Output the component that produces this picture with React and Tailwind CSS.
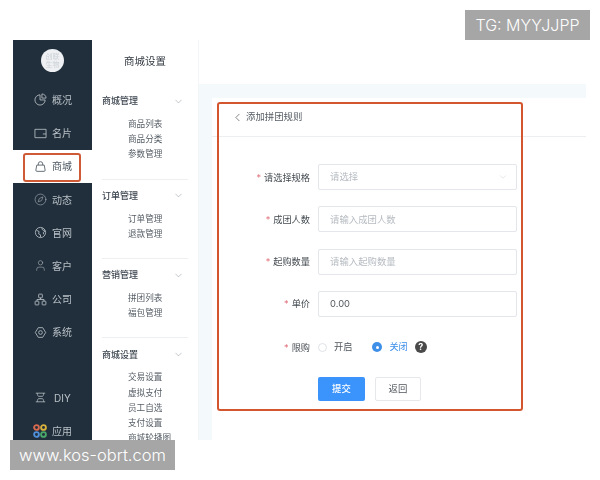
import React from "react";
import { ChevronDown, ChevronLeft, Compass, User } from "lucide-react";

const cjk = "font-['Inter','Noto_Sans_CJK_SC',sans-serif]";

function PieIcon() {
  return (
    <svg width="13" height="13" viewBox="0 0 14 14" fill="none" stroke="currentColor" strokeWidth="0.9">
      <path d="M6.5 2a5.5 5.5 0 1 0 5.5 5.5H6.5z" />
      <path d="M8.5 1v4.5H13A4.5 4.5 0 0 0 8.5 1z" />
    </svg>
  );
}
function CardIcon() {
  return (
    <svg width="13" height="13" viewBox="0 0 14 14" fill="none" stroke="currentColor" strokeWidth="0.9">
      <path d="M1 2.5h12v9H1z" />
      <path d="M9.5 7.5H13" />
    </svg>
  );
}
function BagIcon() {
  return (
    <svg width="13" height="13" viewBox="0 0 14 14" fill="none" stroke="currentColor" strokeWidth="0.9">
      <path d="M3 5.5h8l1 5.5a1.2 1.2 0 0 1-1.2 1.2H3.2A1.2 1.2 0 0 1 2 11z" />
      <path d="M4.6 5.5V4.2a2.4 2.4 0 0 1 4.8 0v1.3" />
    </svg>
  );
}
function GlobeIcon() {
  return (
    <svg width="13" height="13" viewBox="0 0 14 14" fill="none" stroke="currentColor" strokeWidth="0.9">
      <circle cx="7" cy="7" r="5.5" />
      <path d="M2.5 4.5l3 1.5-.5 2.5 2 1v2.5M8.5 2l.5 2 3 1.5-2 1.5.5 2" />
    </svg>
  );
}
function OrgIcon() {
  return (
    <svg width="13" height="13" viewBox="0 0 14 14" fill="none" stroke="currentColor" strokeWidth="0.9">
      <rect x="5" y="1.2" width="4" height="4" rx="0.6" />
      <rect x="1.2" y="8.8" width="4" height="4" rx="0.6" />
      <rect x="8.8" y="8.8" width="4" height="4" rx="0.6" />
      <path d="M7 5.2V7M3.2 8.8V7h7.6v1.8" />
    </svg>
  );
}
function GearIcon() {
  return (
    <svg width="13" height="13" viewBox="0 0 14 14" fill="none" stroke="currentColor" strokeWidth="0.9">
      <path d="M4.6 1.8h4.8L12.6 7l-3.2 5.2H4.6L1.4 7z" strokeLinejoin="round" />
      <circle cx="7" cy="7" r="2" />
    </svg>
  );
}
function DiyIcon() {
  return (
    <svg width="11" height="11" viewBox="0 0 14 14" fill="none" stroke="currentColor" strokeWidth="1">
      <path d="M1 1.5h12M1 12.5h12M3 1.5c0 2.500.5 3.500 1.500 4h5c1-.5 1.500-1.500 1.500-4M3 12.500c0-2.500.5-3.500 1.500-4h5c1 .5 1.500 1.500 1.500 4" />
    </svg>
  );
}
function AppsIcon() {
  return (
    <svg width="14" height="14" viewBox="0 0 14 14" fill="none" strokeWidth="1.9">
      <circle cx="3.5" cy="3.5" r="2.4" stroke="#d9694f" />
      <circle cx="10.5" cy="3.5" r="2.4" stroke="#d8b23c" />
      <circle cx="3.500" cy="10.500" r="2.4" stroke="#4f8fd9" />
      <circle cx="10.500" cy="10.500" r="2.4" stroke="#49a86a" />
    </svg>
  );
}

function NavItem({ icon, label, active, latin }) {
  return (
    <div className={`flex h-[33.2px] shrink-0 items-center pl-[20px] text-[10px] ${active ? "bg-white text-[#4a5560]" : "text-[#b9c0c6]"}`}>
      <span className="flex w-[14px] justify-center">{icon}</span>
      <span className={latin ? "ml-[7px] pt-[1px]" : "ml-[5px] pt-[1px]"}>{label}</span>
    </div>
  );
}

function MenuGroup({ title, items, last }) {
  return (
    <div className={`ml-[10px] mr-[10px] ${last ? "" : "mb-[5px] border-b border-[#eeeff1] pb-[16px]"}`}>
      <div className="flex h-[22px] items-center justify-between pr-[4px] text-[9px] font-medium text-[#3d4650]">
        <span>{title}</span>
        <ChevronDown size={11} strokeWidth={1} className="text-[#7d858c]" />
      </div>
      <div className="mt-[5px] flex flex-col pl-[26px] text-[8.6px] leading-[15.2px] text-[#555d65]">
        {items.map((t) => (
          <span key={t}>{t}</span>
        ))}
      </div>
    </div>
  );
}

function Row({ label, tall, children }) {
  return (
    <div className="flex h-[42.3px] items-start">
      <label className={`flex w-[85px] shrink-0 items-center justify-end gap-[3px] pt-[1px] text-[9.2px] text-[#444a50] ${tall ? "h-[28px]" : "h-[26px]"}`}>
        <span className="text-[#e0707a]">*</span>
        {label}
      </label>
      <div className="ml-[8px] w-[199px]">{children}</div>
    </div>
  );
}

function Field({ text, dark, chevron }) {
  return (
    <div className={`flex h-[26px] items-center justify-between rounded-[2px] border border-[#e3e6ea] pl-[11px] pr-[8px] text-[9.4px] ${dark ? "text-[#50565c]" : "text-[#b6bbc1]"}`}>
      <span className="pt-[1px]">{text}</span>
      {chevron && <ChevronDown size={10} strokeWidth={1} className="text-[#c4c8cc]" />}
    </div>
  );
}

export default function App() {
  return (
    <div className={`relative h-[480px] w-[600px] overflow-hidden bg-white pl-[13px] pt-[40px] ${cjk}`}>
      <div className="flex h-[400px] w-[573px] overflow-hidden blur-[0.35px]">
        <aside className="flex w-[79px] shrink-0 flex-col overflow-hidden bg-[#212f3c] pt-[9px]">
          <div className="mx-auto mb-[11.400px] flex h-[23px] w-[23px] shrink-0 items-center justify-center rounded-full bg-[#eef0f3] text-center text-[7px] leading-[8px] text-[#ccd1d6]">
            创联<br />生物
          </div>
          <NavItem icon={<PieIcon />} label="概况" />
          <NavItem icon={<CardIcon />} label="名片" />
          <NavItem active icon={<BagIcon />} label="商城" />
          <NavItem icon={<Compass size={13} strokeWidth={1} />} label="动态" />
          <NavItem icon={<GlobeIcon />} label="官网" />
          <NavItem icon={<User size={13} strokeWidth={1} />} label="客户" />
          <NavItem icon={<OrgIcon />} label="公司" />
          <NavItem icon={<GearIcon />} label="系统" />
          <div className="h-[32.400px] shrink-0" />
          <NavItem latin icon={<DiyIcon />} label="DIY" />
          <NavItem icon={<AppsIcon />} label="应用" />
        </aside>

        <nav className="w-[106px] shrink-0 overflow-hidden bg-white">
          <div className="flex h-[44px] items-center justify-center text-[10.5px] text-[#333a42]">商城设置</div>
          <div className="pt-[6px]">
            <MenuGroup title="商城管理" items={["商品列表", "商品分类", "参数管理"]} />
            <MenuGroup title="订单管理" items={["订单管理", "退款管理"]} />
            <MenuGroup title="营销管理" items={["拼团列表", "福包管理"]} />
            <MenuGroup last title="商城设置" items={["交易设置", "虚拟支付", "员工自选", "支付设置", "商城轮播图"]} />
          </div>
        </nav>

        <main className="flex w-[388px] shrink-0 flex-col border-l border-[#f3f5f6]">
          <div className="h-[44px] shrink-0 bg-white" />
          <div className="flex flex-1 flex-col bg-[#f4f9fb] pl-[13px] pt-[14px]">
            <div className="flex-1 bg-white">
              <div className="flex h-[39px] items-center gap-[2px] border-b border-[#eceef0] pl-[19px] text-[9.4px] text-[#555c63]">
                <ChevronLeft size={13} strokeWidth={1.2} className="text-[#444]" />
                <span className="pt-[1px]">添加拼团规则</span>
              </div>
              <div className="pl-[13px] pt-[27px]">
                <Row label="请选择规格"><Field text="请选择" chevron /></Row>
                <Row label="成团人数"><Field text="请输入成团人数" /></Row>
                <Row label="起购数量"><Field text="请输入起购数量" /></Row>
                <Row label="单价"><Field text="0.00" dark /></Row>
                <Row tall label="限购">
                  <div className="flex h-[28px] items-center text-[9.2px]">
                    <span className="h-[9px] w-[9px] rounded-full border border-[#dfe2e6]" />
                    <span className="ml-[7px] text-[#50565c]">开启</span>
                    <span className="ml-[20px] flex h-[10px] w-[10px] items-center justify-center rounded-full bg-[#3d8fe8]">
                      <span className="h-[3px] w-[3px] rounded-full bg-white" />
                    </span>
                    <span className="ml-[7px] text-[#3d8fe8]">关闭</span>
                    <span className="ml-[7px] flex h-[12px] w-[12px] items-center justify-center rounded-full bg-[#4a4a4a] text-[9px] font-bold text-white">?</span>
                  </div>
                </Row>
                <div className="ml-[93px] flex gap-[10px] pt-[2px] text-[9.4px]">
                  <button className="h-[24px] w-[47px] rounded-[2px] bg-[#3a94fb] font-medium text-white">提交</button>
                  <button className="h-[24px] w-[46px] rounded-[2px] border border-[#e6e8eb] bg-white text-[#50565c]">返回</button>
                </div>
              </div>
            </div>
          </div>
        </main>
      </div>

      {/* annotation outlines */}
      <div className="absolute left-[23px] top-[153px] h-[29px] w-[58px] rounded-[3px] border-2 border-[#cf5a36]" />
      <div className="absolute left-[217px] top-[102px] h-[309px] w-[306px] rounded-[3px] border-2 border-[#d3562e]" />

      {/* watermarks */}
      <div className="absolute left-[465px] top-[10px] flex h-[30px] w-[125px] items-center justify-center bg-[#a6a6a6] text-[16px] font-light text-white">
        TG: MYYJJPP
      </div>
      <div className="absolute left-[10px] top-[440px] flex h-[30px] w-[165px] items-center justify-center bg-[#a6a6a6] text-[16.5px] font-light text-white">
        www.kos-obrt.com
      </div>
    </div>
  );
}
